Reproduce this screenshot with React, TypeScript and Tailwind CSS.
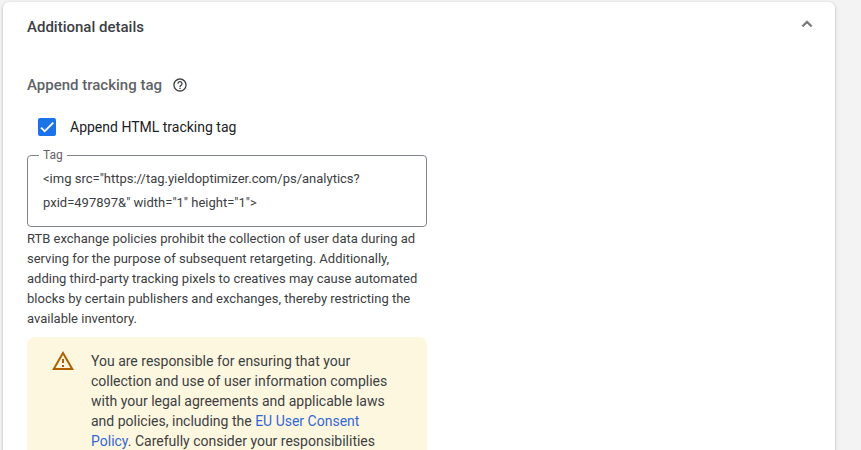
import React, { useState } from "react";

const DEFAULT_TAG = '<img src="https://tag.yieldoptimizer.com/ps/analytics?\npxid=497897&" width="1" height="1">'

const ChevronUp = ({ open }: { open: boolean }) => (
  <svg viewBox="0 0 24 24" className={open ? "size-5" : "size-5 rotate-180"} fill="#757575" aria-hidden="true">
    <path d="M12 8l-6 6 1.41 1.41L12 10.83l4.59 4.58L18 14z" stroke="#757575" strokeWidth="0.9" />
  </svg>
)

const HelpIcon = () => (
  <svg viewBox="0 0 24 24" className="size-4" fill="#3c4043" aria-hidden="true">
    <path d="M11 18h2v-2h-2v2zm1-16C6.48 2 2 6.48 2 12s4.48 10 10 10 10-4.48 10-10S17.52 2 12 2zm0 18c-4.41 0-8-3.59-8-8s3.59-8 8-8 8 3.59 8 8-3.59 8-8 8zm0-14c-2.21 0-4 1.79-4 4h2c0-1.1.9-2 2-2s2 .9 2 2c0 2-3 1.75-3 5h2c0-2.25 3-2.5 3-5 0-2.21-1.79-4-4-4z" />
  </svg>
)

const WarningIcon = () => (
  <svg viewBox="0 0 24 24" className="size-6 shrink-0" fill="#b06000" aria-hidden="true">
    <path d="M12 5.99L19.53 19H4.47L12 5.99M12 2L1 21h22L12 2zm1 14h-2v2h2v-2zm0-6h-2v4h2v-4z" />
  </svg>
)

export default function App() {
  const [open, setOpen] = useState(true);
  const [append, setAppend] = useState(true);
  const [tag, setTag] = useState(DEFAULT_TAG);

  return (
    <div className="h-screen overflow-hidden bg-[#f3f3f3] pt-[2px] pr-[26px] pl-[3px] font-[Roboto,sans-serif] text-[#3c4043]">
      <section className="min-h-full rounded-t-md bg-white pr-[18px] pl-6 shadow-[0_1px_3px_rgba(0,0,0,0.3)]">
        <header className="flex items-start justify-between pt-3">
          <h2 className="pt-[3px] text-[15px] font-medium leading-5">Additional details</h2>
          <button type="button" aria-label="Toggle additional details" aria-expanded={open} onClick={() => setOpen(!open)}>
            <ChevronUp open={open} />
          </button>
        </header>

        {open && (
          <div className="pt-[38px]">
            <div className="flex items-center gap-[10px]">
              <h3 className="text-[15px] font-medium leading-5 text-[#5f6368]">Append tracking tag</h3>
              <button type="button" aria-label="Help">
                <HelpIcon />
              </button>
            </div>

            <label className="mt-[22px] flex items-center gap-[14px] pl-[11px] text-sm leading-5 text-[#202124]">
              <span className="grid size-[18px] place-items-center">
                <input
                  type="checkbox"
                  checked={append}
                  onChange={(e) => setAppend(e.target.checked)}
                  className="col-start-1 row-start-1 size-[18px] appearance-none rounded-xs border-2 border-[#5f6368] checked:border-[#1a73e8] checked:bg-[#1a73e8]"
                />
                {append && (
                  <svg viewBox="0 0 24 24" className="pointer-events-none col-start-1 row-start-1 size-[14px]" fill="none" stroke="white" strokeWidth="3.12" aria-hidden="true">
                    <path d="M1.73 12.91l6.37 6.37L22.79 4.59" />
                  </svg>
                )}
              </span>
              Append HTML tracking tag
            </label>

            <div className="max-w-[400px]">
              <div className="relative mt-[18px]">
                <label htmlFor="tag" className="absolute -top-2 left-3 bg-white px-1 text-xs leading-4 text-[#5f6368]">Tag</label>
                <textarea
                  id="tag"
                  rows={2}
                  value={tag}
                  onChange={(e) => setTag(e.target.value)}
                  className="block h-[72px] w-full resize-none overflow-hidden rounded-sm border border-[#80868b] px-[15px] py-[11px] text-[13px] leading-6 outline-none"
                />
              </div>

              <p className="pt-[2px] text-[13px] leading-5">
                RTB exchange policies prohibit the collection of user data during ad<br />
                serving for the purpose of subsequent retargeting. Additionally,<br />
                adding third-party tracking pixels to creatives may cause automated<br />
                blocks by certain publishers and exchanges, thereby restricting the<br />
                available inventory.
              </p>

              <div className="mt-2 flex gap-4 rounded-lg bg-[#fef7e0] px-6 pt-3 pb-6">
                <WarningIcon />
                <p className="pt-[2px] text-sm leading-5">
                  You are responsible for ensuring that your<br />
                  collection and use of user information complies<br />
                  with your legal agreements and applicable laws<br />
                  and policies, including the <a href="#policy" className="text-[#3367d6]">EU User Consent<br />
                  Policy</a>. Carefully consider your responsibilities
                </p>
              </div>
            </div>
          </div>
        )}
      </section>
    </div>
  );
};
